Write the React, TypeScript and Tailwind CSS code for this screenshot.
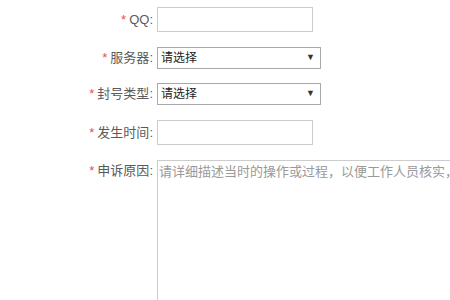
const labelFont = { fontFamily: '"Liberation Sans", "Noto Sans CJK SC", sans-serif' }

function Label({ text }: { text: string }) {
  return (
    <div className="w-[157px] shrink-0 pr-[4px] text-right text-[13px] text-[#5a5a5a]">
      <span className="mr-[3px] text-[#e8504f]">*</span>
      {text}:
    </div>
  )
}

function Select() {
  return (
    <div className="flex h-[22px] w-[164px] items-center justify-between border border-[#a9a9a9] bg-white pl-[3px] pr-[5px] text-[12px] text-[#222]">
      <span>请选择</span>
      <span className="text-[9px] text-[#333]">▼</span>
    </div>
  )
}

export default function App() {
  return (
    <div className="h-[300px] w-[450px] overflow-hidden bg-white" style={labelFont}>
      <div className="pt-[7px]">
        <div className="flex items-center">
          <Label text="QQ" />
          <div className="h-[25px] w-[156px] border border-[#ccc] bg-white" />
        </div>
        <div className="mt-[15px] flex items-center">
          <Label text="服务器" />
          <Select />
        </div>
        <div className="mt-[14px] flex items-center">
          <Label text="封号类型" />
          <Select />
        </div>
        <div className="mt-[15px] flex items-center">
          <Label text="发生时间" />
          <div className="h-[25px] w-[156px] border border-[#ccc] bg-white" />
        </div>
        <div className="mt-[15px] flex items-start">
          <div className="pt-[1px]">
            <Label text="申诉原因" />
          </div>
          <div className="h-[160px] w-[320px] shrink-0 border border-[#ccc] bg-white pl-[1px] pt-[1px] text-[13px] whitespace-nowrap text-[#999]">
            请详细描述当时的操作或过程，以便工作人员核实，
          </div>
        </div>
      </div>
    </div>
  )
}
